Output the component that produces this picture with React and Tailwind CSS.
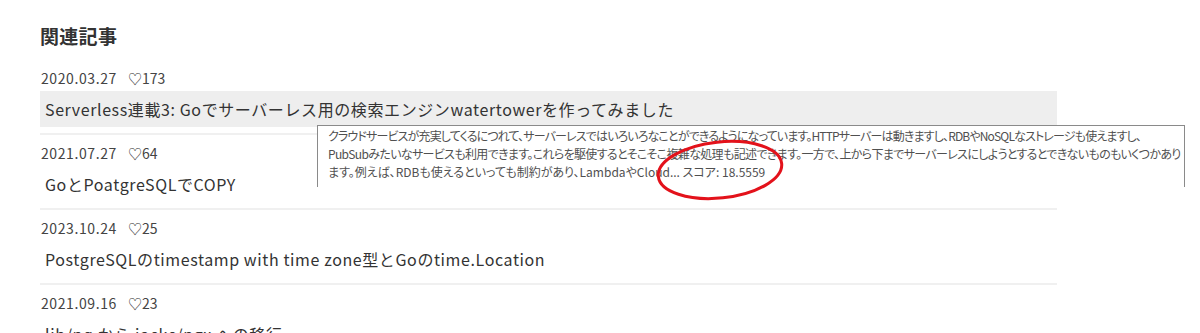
import React from 'react';

const articles = [
  { date: '2020.03.27', likes: 173, title: 'Serverless連載3: Goでサーバーレス用の検索エンジンwatertowerを作ってみました', active: true },
  { date: '2021.07.27', likes: 64, title: 'GoとPoatgreSQLでCOPY' },
  { date: '2023.10.24', likes: 25, title: 'PostgreSQLのtimestamp with time zone型とGoのtime.Location' },
  { date: '2021.09.16', likes: 23, title: 'lib/pq から jackc/pgx への移行' },
];

const font = { fontFamily: '"Noto Sans CJK JP", "Noto Sans", sans-serif' };

const App = () => {
  return (
    <div className="relative w-[1200px] h-[333px] overflow-hidden bg-white text-[#333]" style={font}>
      <div className="pl-10 pr-[143px] pt-[22px]">
        <h2 className="text-[19px] font-bold leading-[28px] mb-[10px] tracking-[0.3px]">関連記事</h2>
        <ul>
          {articles.map((a, i) => (
            <li key={i} className="pt-2 pb-1.5 border-b-2 border-[#f0f0f0]">
              <div className="text-[14px] leading-5 text-[#444] pl-px">
                <span className="tracking-[0.6px]">{a.date}</span>
                <span className="ml-[11px]">♡{a.likes}</span>
              </div>
              <a
                href="#"
                className={`mt-[3px] flex items-center h-9 pl-[5px] text-[16px] tracking-[0.6px] whitespace-nowrap ${a.active ? 'bg-[#eeeeee]' : ''}`}
              >
                {a.title}
              </a>
            </li>
          ))}
        </ul>
      </div>

      <div className="absolute left-[317px] top-[125px] w-[868px] h-[62px] bg-white border border-b-0 border-[#8a8a8a] pl-[10px] pt-px text-[12px] leading-[18px] text-[#505050] whitespace-nowrap [font-feature-settings:'palt']">
        <div className="tracking-[-0.85px]">
          クラウドサービスが充実してくるにつれて、サーバーレスではいろいろなことができるようになっています。HTTPサーバーは動きますし、RDBやNoSQLなストレージも使えますし、
        </div>
        <div className="tracking-[-0.65px]">
          PubSubみたいなサービスも利用できます。これらを駆使するとそこそこ複雑な処理も記述できます。一方で、上から下までサーバーレスにしようとするとできないものもいくつかあり
        </div>
        <div>ます。例えば、RDBも使えるといっても制約があり、LambdaやCloud... スコア: 18.5559</div>
      </div>

      <svg className="absolute left-0 top-0" width="1200" height="333">
        <ellipse cx="720" cy="170" rx="62" ry="28" transform="rotate(-6 720 170)" fill="none" stroke="#e3121b" strokeWidth="3" />
      </svg>
    </div>
  );
};

export default App;
